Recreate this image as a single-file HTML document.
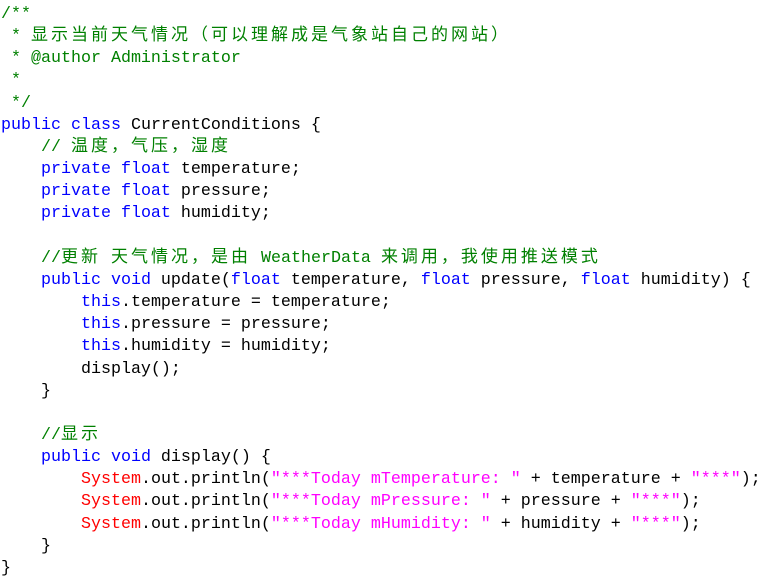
<!DOCTYPE html>
<html><head><meta charset="utf-8"><style>
html,body{margin:0;padding:0;background:#fff;width:765px;height:586px;overflow:hidden}
#w{position:absolute;left:1px;top:4px;font-family:"Liberation Mono","Noto Sans CJK SC",monospace;font-size:16.67px;color:#000}
#w div{height:22.16px;line-height:22px;white-space:pre;overflow:visible}
.c{color:#008000}.k{color:#0000ff}.r{color:#ff0000}.s{color:#ff00ff}
.z{font-family:"Noto Sans CJK SC",sans-serif;font-size:17px;letter-spacing:3px;line-height:0}
</style></head><body><div id="w">
<div class="c">/**</div>
<div class="c"> * <span class="z">显示当前天气情况（可以理解成是气象站自己的网站）</span></div>
<div class="c"> * @author Administrator</div>
<div class="c"> *</div>
<div class="c"> */</div>
<div><span class="k">public class</span> CurrentConditions {</div>
<div>    <span class="c">// <span class="z">温度，气压，湿度</span></span></div>
<div>    <span class="k">private float</span> temperature;</div>
<div>    <span class="k">private float</span> pressure;</div>
<div>    <span class="k">private float</span> humidity;</div>
<div> </div>
<div>    <span class="c">//<span class="z">更新</span> <span class="z">天气情况，是由</span> WeatherData <span class="z">来调用，我使用推送模式</span></span></div>
<div>    <span class="k">public void</span> update(<span class="k">float</span> temperature, <span class="k">float</span> pressure, <span class="k">float</span> humidity) {</div>
<div>        <span class="k">this</span>.temperature = temperature;</div>
<div>        <span class="k">this</span>.pressure = pressure;</div>
<div>        <span class="k">this</span>.humidity = humidity;</div>
<div>        display();</div>
<div>    }</div>
<div> </div>
<div>    <span class="c">//<span class="z">显示</span></span></div>
<div>    <span class="k">public void</span> display() {</div>
<div>        <span class="r">System</span>.out.println(<span class="s">"***Today mTemperature: "</span> + temperature + <span class="s">"***"</span>);</div>
<div>        <span class="r">System</span>.out.println(<span class="s">"***Today mPressure: "</span> + pressure + <span class="s">"***"</span>);</div>
<div>        <span class="r">System</span>.out.println(<span class="s">"***Today mHumidity: "</span> + humidity + <span class="s">"***"</span>);</div>
<div>    }</div>
<div>}</div>
</div></body></html>
